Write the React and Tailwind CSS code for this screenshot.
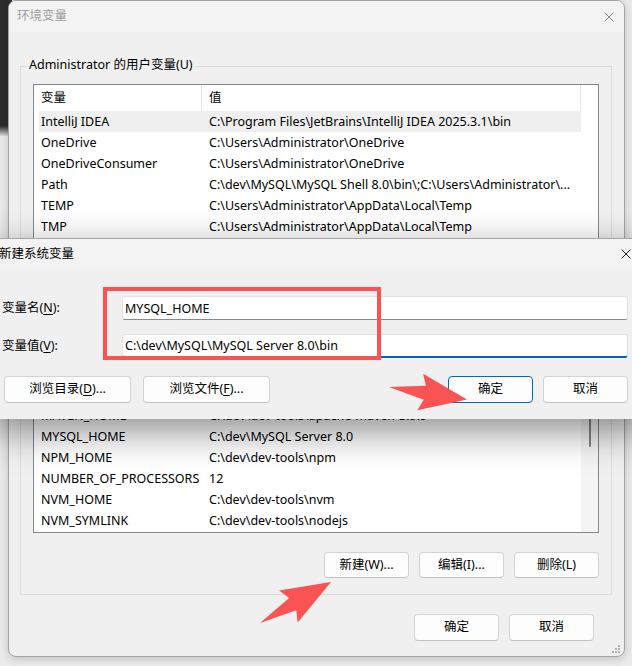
import React from "react";

const FONT = "font-['Noto_Sans','Noto_Sans_CJK_SC',sans-serif]";

const rows1 = [
  ["IntelliJ IDEA", "C:\\Program Files\\JetBrains\\IntelliJ IDEA 2025.3.1\\bin"],
  ["OneDrive", "C:\\Users\\Administrator\\OneDrive"],
  ["OneDriveConsumer", "C:\\Users\\Administrator\\OneDrive"],
  ["Path", "C:\\dev\\MySQL\\MySQL Shell 8.0\\bin\\;C:\\Users\\Administrator\\..."],
  ["TEMP", "C:\\Users\\Administrator\\AppData\\Local\\Temp"],
  ["TMP", "C:\\Users\\Administrator\\AppData\\Local\\Temp"],
];

const rows2 = [
  ["JAVA_HOME", "C:\\dev\\dev-tools\\jdk-21"],
  ["MAVEN_HOME", "C:\\dev\\dev-tools\\apache-maven-3.9.9"],
  ["MYSQL_HOME", "C:\\dev\\MySQL Server 8.0"],
  ["NPM_HOME", "C:\\dev\\dev-tools\\npm"],
  ["NUMBER_OF_PROCESSORS", "12"],
  ["NVM_HOME", "C:\\dev\\dev-tools\\nvm"],
  ["NVM_SYMLINK", "C:\\dev\\dev-tools\\nodejs"],
];

function XIcon({ color }) {
  return (
    <svg width="10" height="10" viewBox="0 0 10 10" fill="none">
      <path d="M0.5 0.5L9.5 9.5M9.5 0.5L0.5 9.5" stroke={color} strokeWidth="1" />
    </svg>
  );
}

function Btn({ children, primary = false, wide = false, tall = true }) {
  return (
    <button
      className={`${wide ? "w-[127px]" : "w-[85px]"} ${tall ? "h-[27px]" : "h-[26px]"} shrink-0 rounded-[4px] border bg-[#fdfdfd] text-[12.5px] text-black flex items-center justify-center ${
        primary ? "border-[#0067c0]" : "border-[#d3d3d3] border-b-[#c2c2c2]"
      }`}
    >
      {children}
    </button>
  );
}

function VarList({ rows, h, highlight, thumb }) {
  return (
    <div className={`flex border border-[#828790] bg-white overflow-hidden ${h}`}>
      <div className="flex w-[547px] shrink-0 flex-col">
        <div className="flex h-[26px] shrink-0 border-r border-[#e5e5e5]">
          <div className="w-[168px] border-r border-[#e5e5e5] pl-[7px] leading-[26px]">变量</div>
          <div className="pl-[7px] leading-[26px]">值</div>
        </div>
        <div className="flex flex-col pl-[5px]">
          {rows.map(([k, v], i) => (
            <div
              key={i}
              className={`flex h-[21px] shrink-0 leading-[21px] whitespace-nowrap ${
                highlight === i ? "bg-[#efefef]" : ""
              }`}
            >
              <div className="w-[168px] shrink-0 overflow-hidden pl-[2px]">{k}</div>
              <div className="pl-[2px]">{v}</div>
            </div>
          ))}
        </div>
      </div>
      {thumb ? (
        <div className="flex w-[17px] flex-col items-center bg-[#f4f4f4] pt-[44px]">
          <div className="h-[45px] w-[2px] rounded-full bg-[#858585]" />
        </div>
      ) : (
        <div className="w-[17px] bg-white" />
      )}
    </div>
  );
}

function Group({ label, children, className }) {
  return (
    <div className={`relative border border-[#dcdcdc] px-[12px] ${className}`}>
      <span className="absolute -top-[10px] left-[6px] bg-[#f0f0f0] px-[2px] leading-[16px]">{label}</span>
      {children}
    </div>
  );
}

function arrow(T, P, back = 0.4, notch = 0.46, bw = 18.5, nw = 7) {
  const dx = P[0] - T[0];
  const dy = P[1] - T[1];
  const L = Math.hypot(dx, dy);
  const ux = dx / L;
  const uy = dy / L;
  const px = -uy;
  const py = ux;
  const pt = (a, p) => [T[0] + ux * a * L + px * p, T[1] + uy * a * L + py * p];
  const pts = [T, pt(notch, -nw), pt(back, -bw), P, pt(back, bw), pt(notch, nw)];
  return pts.map((q) => q.map((n) => n.toFixed(1)).join(",")).join(" ");
}

export default function App() {
  return (
    <div className={`relative h-[666px] w-[632px] overflow-hidden bg-[#ebebeb] text-[12.5px] text-black ${FONT}`}>
      {/* desktop behind */}
      <div className="absolute left-0 top-0 h-[136px] w-[12px] bg-[linear-gradient(#2c2c2c_0,#2c2c2c_126px,#dedede_136px)]" />

      {/* main window */}
      <div className="absolute left-[8px] top-0 flex h-[657px] w-[617px] flex-col overflow-hidden rounded-[8px] border border-[#a3a3a3] bg-[#f0f0f0] shadow-[0_2px_10px_rgba(0,0,0,0.18)]">
        <div className="flex h-[31px] shrink-0 items-center justify-between bg-[#f3f3f3] pl-[8px] pr-[10px]">
          <span className="text-[#a0a0a0]">环境变量</span>
          <XIcon color="#8a8a8a" />
        </div>
        <div className="flex flex-col pl-[11px] pr-[12px]">
          <Group label="Administrator 的用户变量(U)" className="mt-[34px] pt-[17px] pb-[9px]">
            <VarList rows={rows1} h="h-[192px]" highlight={0} />
            <div className="mt-[10px] flex justify-end gap-[10px]">
              <Btn tall={false}>新建(N)...</Btn>
              <Btn tall={false}>编辑(E)...</Btn>
              <Btn tall={false}>删除(D)</Btn>
            </div>
          </Group>
          <Group label="系统变量(S)" className="mt-[18px] pt-[16px] pb-[16px]">
            <VarList rows={rows2} h="h-[176px]" thumb />
            <div className="mt-[19px] flex justify-end gap-[10px]">
              <Btn tall={false}>新建(W)...</Btn>
              <Btn tall={false}>编辑(I)...</Btn>
              <Btn tall={false}>删除(L)</Btn>
            </div>
          </Group>
          <div className="mt-[19px] flex justify-end gap-[10px] pr-[18px]">
            <Btn>确定</Btn>
            <Btn>取消</Btn>
          </div>
        </div>
        <svg className="absolute bottom-[2px] right-[3px]" width="9" height="9" viewBox="0 0 9 9">
          <rect x="6" y="0" width="2" height="2" fill="#b0b0b0" />
          <rect x="3" y="3" width="2" height="2" fill="#b0b0b0" />
          <rect x="6" y="3" width="2" height="2" fill="#b0b0b0" />
          <rect x="0" y="6" width="2" height="2" fill="#b0b0b0" />
          <rect x="3" y="6" width="2" height="2" fill="#b0b0b0" />
          <rect x="6" y="6" width="2" height="2" fill="#b0b0b0" />
        </svg>
      </div>

      {/* new system variable dialog */}
      <div className="absolute left-[-9px] top-[238px] flex h-[181px] w-[658px] flex-col border-t border-[#a8a8a8] bg-[#f0f0f0] shadow-[0_12px_36px_rgba(0,0,0,0.45)]">
        <div className="flex h-[30px] shrink-0 items-center justify-between bg-[#f3f3f3] pl-[8px]">
          <span>新建系统变量</span>
          <div className="flex h-full w-[46px] items-center justify-center">
            <XIcon color="#1a1a1a" />
          </div>
        </div>
        <div className="flex flex-col pl-[11px] pr-[21px] pt-[27px]">
          <div className="flex h-[24px] items-center">
            <label className="w-[120px] shrink-0">
              变量名(<span className="underline underline-offset-2">N</span>):
            </label>
            <input
              readOnly
              value="MYSQL_HOME"
              className={`h-[24px] flex-1 rounded-[3px] border border-[#e2e2e2] border-b-[#8a8a8a] bg-white pl-[2px] text-[12.5px] text-black outline-none ${FONT}`}
            />
          </div>
          <div className="mt-[14px] flex h-[24px] items-center">
            <label className="w-[120px] shrink-0">
              变量值(<span className="underline underline-offset-2">V</span>):
            </label>
            <input
              readOnly
              value="C:\dev\MySQL\MySQL Server 8.0\bin"
              className={`h-[24px] flex-1 rounded-[3px] border border-[#e2e2e2] border-b-2 border-b-[#0067c0] bg-white pl-[2px] text-[12.5px] text-black outline-none ${FONT}`}
            />
          </div>
          <div className="ml-[2px] mt-[18px] flex items-center justify-between">
            <div className="flex gap-[12px]">
              <Btn wide>
                浏览目录(<span className="underline underline-offset-2">D</span>)...
              </Btn>
              <Btn wide>
                浏览文件(<span className="underline underline-offset-2">F</span>)...
              </Btn>
            </div>
            <div className="flex gap-[10px]">
              <Btn primary>确定</Btn>
              <Btn>取消</Btn>
            </div>
          </div>
        </div>
      </div>

      {/* annotations */}
      <div className="pointer-events-none absolute left-[103px] top-[287px] h-[73px] w-[278px] border-[4px] border-[#f95353]" />
      <svg className="pointer-events-none absolute left-0 top-0" width="632" height="666" viewBox="0 0 632 666">
        <polygon points={arrow([389, 387], [467, 399.5])} fill="#f95353" />
        <polygon points={arrow([260, 623], [331, 582])} fill="#f95353" />
      </svg>
    </div>
  );
}
